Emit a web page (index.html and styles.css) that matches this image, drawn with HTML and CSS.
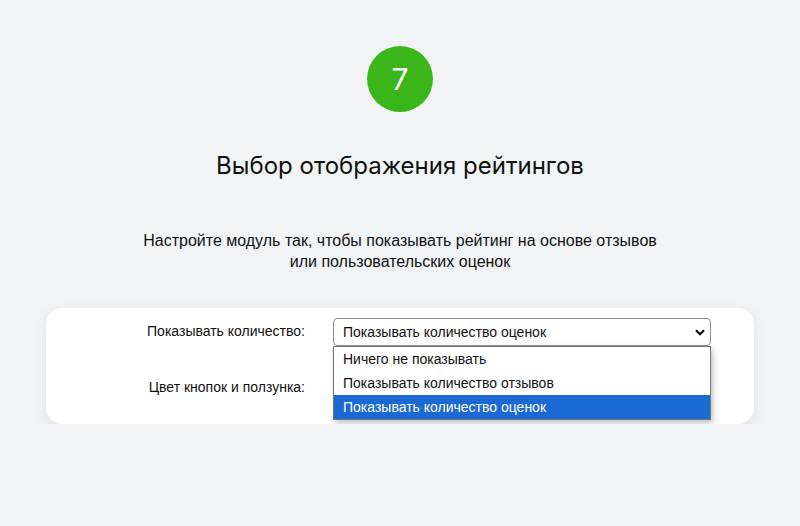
FILE: index.html
```html
<!DOCTYPE html>
<html lang="ru">
  <head>
    <meta charset="UTF-8" />
    <meta name="viewport" content="width=device-width, initial-scale=1.0" />
    <title>Выбор отображения рейтингов</title>
    <link rel="stylesheet" href="styles.css">
  </head>
  <body>
    <div class="step">
      <div class="step-number">7</div>
      <h1 class="step-title">Выбор отображения рейтингов</h1>
      <p class="step-text">
        Настройте модуль так, чтобы показывать рейтинг на основе отзывов<br />
        или пользовательских оценок
      </p>
    </div>

    <div class="card">
      <form class="settings-form">
        <label class="field-label" for="show_count">Показывать количество:</label>
        <div class="fake-select" id="show_count">
          <span>Показывать количество оценок</span>
          <svg class="chevron" width="10" height="7" viewBox="0 0 10 7">
            <path d="M1 1.2 L5 5.2 L9 1.2" fill="none" stroke="#111" stroke-width="2.2" />
          </svg>
        </div>

        <label class="field-label field-label-second" for="btn_color">Цвет кнопок и ползунка:</label>
        <div class="color-input" id="btn_color"></div>
      </form>

      <ul class="select-popup">
        <li>Ничего не показывать</li>
        <li>Показывать количество отзывов</li>
        <li class="selected">Показывать количество оценок</li>
      </ul>
    </div>
  </body>
</html>
```

FILE: styles.css
```css
body {
  margin: 0;
  padding: 0;
  background-color: #f2f3f5;
  font-family: "Liberation Sans", Arial, sans-serif;
  color: #111;
}

.step {
  display: flex;
  flex-direction: column;
  align-items: center;
  padding-top: 46px;
}

.step-number {
  width: 66px;
  height: 66px;
  border-radius: 50%;
  background-color: #3bb61a;
  color: white;
  font-family: Inter, sans-serif;
  font-size: 30px;
  line-height: 66px;
  text-align: center;
}

.step-title {
  font-family: Inter, sans-serif;
  font-weight: 400;
  font-size: 24px;
  line-height: 30px;
  margin: 39px 0 0;
}

.step-text {
  font-size: 16px;
  line-height: 21px;
  text-align: center;
  margin: 49px 0 0;
}

.card {
  position: relative;
  margin: 36px 46px 0;
  height: 116px;
  background-color: white;
  border-radius: 16px;
  box-shadow: 0 4px 14px rgba(30, 50, 90, 0.09);
}

.settings-form {
  display: grid;
  grid-template-columns: 259px 378px;
  column-gap: 28px;
  padding-top: 10px;
}

.field-label {
  font-size: 14px;
  line-height: 20px;
  text-align: right;
  padding-top: 3px;
}

.field-label-second {
  margin-top: 28px;
}

.fake-select {
  display: flex;
  align-items: center;
  justify-content: space-between;
  height: 26px;
  padding: 0 5px 0 9px;
  border: 1px solid #8f8f8f;
  border-radius: 4px;
  font-size: 14px;
}

/* sits under the card, only its bottom edge peeks out */
.color-input {
  position: relative;
  z-index: -1;
  width: 181px;
  height: 38px;
  margin: 39px 0 0 2px;
  border: 1px solid #8a8a8a;
  border-radius: 2px;
  background-color: #efefef;
}

.select-popup {
  position: absolute;
  left: 287px;
  top: 38px;
  width: 376px;
  margin: 0;
  padding: 0;
  list-style: none;
  background-color: white;
  border: 1px solid #767676;
  box-shadow: 2px 3px 6px rgba(0, 0, 0, 0.25);
  font-size: 14px;
}

.select-popup li {
  height: 24px;
  line-height: 24px;
  padding-left: 9px;
}

.select-popup li.selected {
  background-color: #1a69d4;
  color: white;
}
```
